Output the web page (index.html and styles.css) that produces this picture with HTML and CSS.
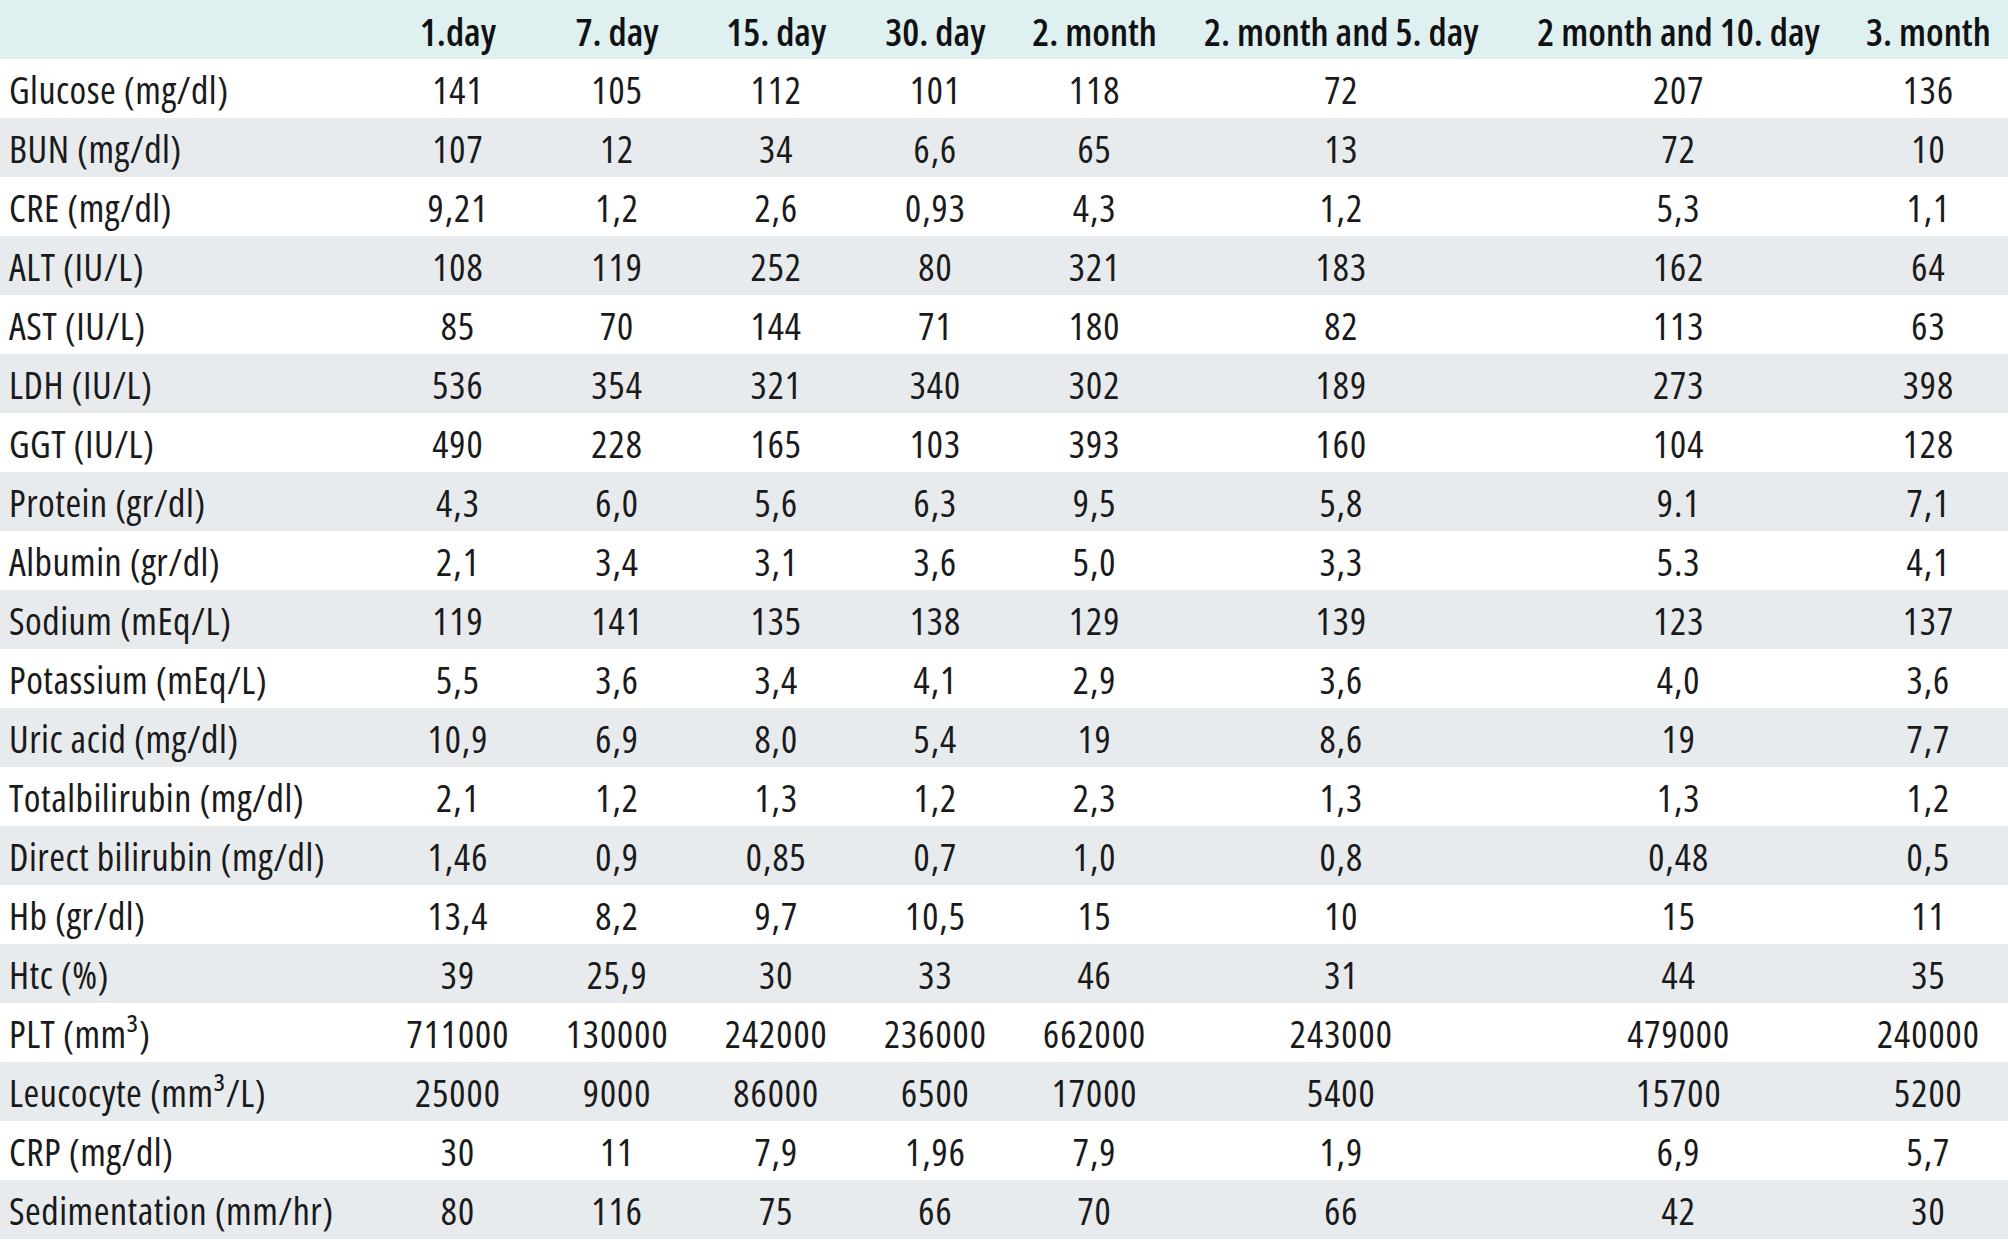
FILE: index.html
```html
<!DOCTYPE html>
<html>
<head>
<meta charset="utf-8">
<link rel="stylesheet" href="styles.css">
</head>
<body>
<table class="lab">
<colgroup>
<col class="c-label"><col class="c-s"><col class="c-s"><col class="c-s"><col class="c-s"><col class="c-s"><col class="c-w1"><col class="c-w2"><col class="c-s">
</colgroup>
<thead>
<tr><th></th><th>1.day</th><th>7. day</th><th>15. day</th><th>30. day</th><th>2. month</th><th>2. month and 5. day</th><th>2 month and 10. day</th><th>3. month</th></tr>
</thead>
<tbody>
<tr><td>Glucose (mg/dl)</td><td>141</td><td>105</td><td>112</td><td>101</td><td>118</td><td>72</td><td>207</td><td>136</td></tr>
<tr><td>BUN (mg/dl)</td><td>107</td><td>12</td><td>34</td><td>6,6</td><td>65</td><td>13</td><td>72</td><td>10</td></tr>
<tr><td>CRE (mg/dl)</td><td>9,21</td><td>1,2</td><td>2,6</td><td>0,93</td><td>4,3</td><td>1,2</td><td>5,3</td><td>1,1</td></tr>
<tr><td>ALT (IU/L)</td><td>108</td><td>119</td><td>252</td><td>80</td><td>321</td><td>183</td><td>162</td><td>64</td></tr>
<tr><td>AST (IU/L)</td><td>85</td><td>70</td><td>144</td><td>71</td><td>180</td><td>82</td><td>113</td><td>63</td></tr>
<tr><td>LDH (IU/L)</td><td>536</td><td>354</td><td>321</td><td>340</td><td>302</td><td>189</td><td>273</td><td>398</td></tr>
<tr><td>GGT (IU/L)</td><td>490</td><td>228</td><td>165</td><td>103</td><td>393</td><td>160</td><td>104</td><td>128</td></tr>
<tr><td>Protein (gr/dl)</td><td>4,3</td><td>6,0</td><td>5,6</td><td>6,3</td><td>9,5</td><td>5,8</td><td>9.1</td><td>7,1</td></tr>
<tr><td>Albumin (gr/dl)</td><td>2,1</td><td>3,4</td><td>3,1</td><td>3,6</td><td>5,0</td><td>3,3</td><td>5.3</td><td>4,1</td></tr>
<tr><td>Sodium (mEq/L)</td><td>119</td><td>141</td><td>135</td><td>138</td><td>129</td><td>139</td><td>123</td><td>137</td></tr>
<tr><td>Potassium (mEq/L)</td><td>5,5</td><td>3,6</td><td>3,4</td><td>4,1</td><td>2,9</td><td>3,6</td><td>4,0</td><td>3,6</td></tr>
<tr><td>Uric acid (mg/dl)</td><td>10,9</td><td>6,9</td><td>8,0</td><td>5,4</td><td>19</td><td>8,6</td><td>19</td><td>7,7</td></tr>
<tr><td>Totalbilirubin (mg/dl)</td><td>2,1</td><td>1,2</td><td>1,3</td><td>1,2</td><td>2,3</td><td>1,3</td><td>1,3</td><td>1,2</td></tr>
<tr><td>Direct bilirubin (mg/dl)</td><td>1,46</td><td>0,9</td><td>0,85</td><td>0,7</td><td>1,0</td><td>0,8</td><td>0,48</td><td>0,5</td></tr>
<tr><td>Hb (gr/dl)</td><td>13,4</td><td>8,2</td><td>9,7</td><td>10,5</td><td>15</td><td>10</td><td>15</td><td>11</td></tr>
<tr><td>Htc (%)</td><td>39</td><td>25,9</td><td>30</td><td>33</td><td>46</td><td>31</td><td>44</td><td>35</td></tr>
<tr><td>PLT (mm³)</td><td>711000</td><td>130000</td><td>242000</td><td>236000</td><td>662000</td><td>243000</td><td>479000</td><td>240000</td></tr>
<tr><td>Leucocyte (mm³/L)</td><td>25000</td><td>9000</td><td>86000</td><td>6500</td><td>17000</td><td>5400</td><td>15700</td><td>5200</td></tr>
<tr><td>CRP (mg/dl)</td><td>30</td><td>11</td><td>7,9</td><td>1,96</td><td>7,9</td><td>1,9</td><td>6,9</td><td>5,7</td></tr>
<tr><td>Sedimentation (mm/hr)</td><td>80</td><td>116</td><td>75</td><td>66</td><td>70</td><td>66</td><td>42</td><td>30</td></tr>
</tbody>
</table>
</body>
</html>
```
FILE: styles.css
```css
html, body {
  margin: 0;
  padding: 0;
  background: #ffffff;
}
.lab {
  width: 2008px;
  border-collapse: collapse;
  table-layout: fixed;
  font-family: "Open Sans", "DejaVu Sans Condensed", sans-serif;
  font-stretch: 75%;
  font-weight: 400;
  font-size: 38px;
  letter-spacing: 1px;
  color: #1a1a1a;
}
.c-label { width: 378px; }
.c-s { width: 159px; }
.c-w1 { width: 334px; }
.c-w2 { width: 340px; }
.lab th, .lab td {
  height: 59px;
  padding: 0;
  text-align: center;
  vertical-align: middle;
  white-space: nowrap;
}
.lab thead tr {
  background: #def0f0;
}
.lab th {
  height: 56px;
  padding-top: 3px;
  font-weight: 600;
  letter-spacing: 0;
  color: #111;
}
.lab td:first-child {
  text-align: left;
  padding-left: 9px;
  letter-spacing: 0.5px;
}
.lab tbody tr:nth-child(even) {
  background: #e8ebee;
}
```
